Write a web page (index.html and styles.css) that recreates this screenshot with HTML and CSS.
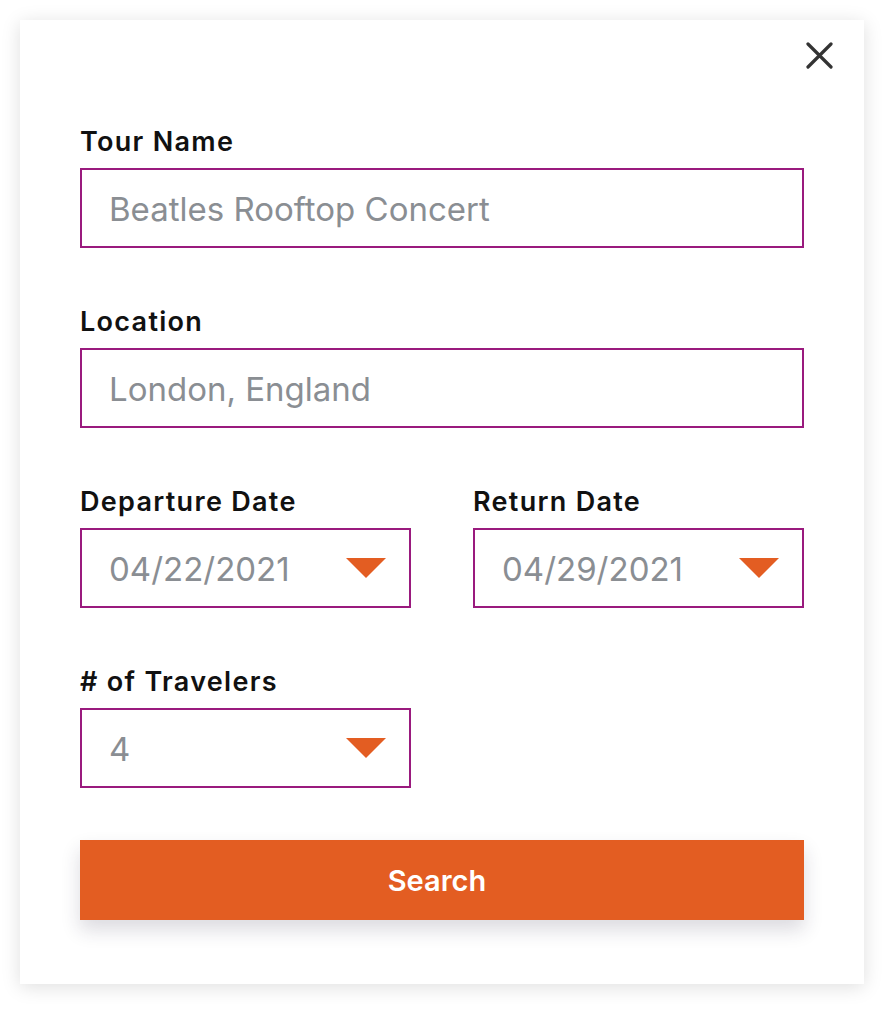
FILE: index.html
```html
<!DOCTYPE html>
<html lang="en">
<head>
<meta charset="utf-8">
<title>Tour Search</title>
<link rel="stylesheet" href="styles.css">
</head>
<body>
<div class="card">
  <div class="card-header">
    <button class="close" aria-label="Close">
      <svg width="27" height="27" viewBox="0 0 27 27"><path d="M2 2 L25 25 M25 2 L2 25" stroke="#333" stroke-width="3.2" stroke-linecap="round" fill="none"/></svg>
    </button>
  </div>
  <form class="form">
    <div class="field">
      <label class="label">Tour Name</label>
      <div class="control"><span class="value">Beatles Rooftop Concert</span></div>
    </div>
    <div class="field">
      <label class="label">Location</label>
      <div class="control"><span class="value">London, England</span></div>
    </div>
    <div class="row">
      <div class="field">
        <label class="label">Departure Date</label>
        <div class="control select"><span class="value">04/22/2021</span><span class="caret"></span></div>
      </div>
      <div class="field">
        <label class="label">Return Date</label>
        <div class="control select"><span class="value">04/29/2021</span><span class="caret"></span></div>
      </div>
    </div>
    <div class="row">
      <div class="field">
        <label class="label"># of Travelers</label>
        <div class="control select"><span class="value">4</span><span class="caret"></span></div>
      </div>
      <div></div>
    </div>
    <button type="button" class="search">Search</button>
  </form>
</div>
</body>
</html>
```

FILE: styles.css
```css
* { box-sizing: border-box; }
html, body { margin: 0; padding: 0; background: #fff; }
body {
  font-family: "Inter", "Liberation Sans", sans-serif;
  padding: 20px;
}
.card {
  width: 844px;
  background: #fff;
  box-shadow: 0 3px 18px rgba(0, 0, 0, 0.13);
  padding: 22px 60px 64px;
}
.card-header {
  display: flex;
  justify-content: flex-end;
  margin-right: -29px;
  height: 27px;
}
.close {
  border: 0;
  background: none;
  padding: 0;
  width: 27px;
  height: 27px;
  display: block;
  cursor: pointer;
}
.close svg { display: block; }
.form {
  display: flex;
  flex-direction: column;
  gap: 60px;
  margin-top: 59px;
}
.field {
  display: flex;
  flex-direction: column;
  gap: 12px;
}
.label {
  font-size: 27px;
  line-height: 28px;
  font-weight: 600;
  letter-spacing: 1.3px;
  color: #111;
}
.control {
  height: 80px;
  border: 2px solid #9a1a7e;
  display: flex;
  align-items: center;
  padding: 0 23px 0 27px;
  justify-content: space-between;
}
.value {
  font-size: 33px;
  color: #8a8e93;
  padding-top: 1px;
}
.caret {
  width: 0;
  height: 0;
  border-left: 20px solid transparent;
  border-right: 20px solid transparent;
  border-top: 20px solid #e35d22;
}
.row {
  display: grid;
  grid-template-columns: 1fr 1fr;
  column-gap: 62px;
}
.search {
  margin-top: -8px;
  height: 80px;
  border: 0;
  background: #e35d22;
  color: #fff;
  font-family: inherit;
  font-size: 29px;
  font-weight: 600;
  padding: 0 10px 0 0;
  box-shadow: 0 10px 18px rgba(40, 30, 60, 0.16);
  cursor: pointer;
}
```
